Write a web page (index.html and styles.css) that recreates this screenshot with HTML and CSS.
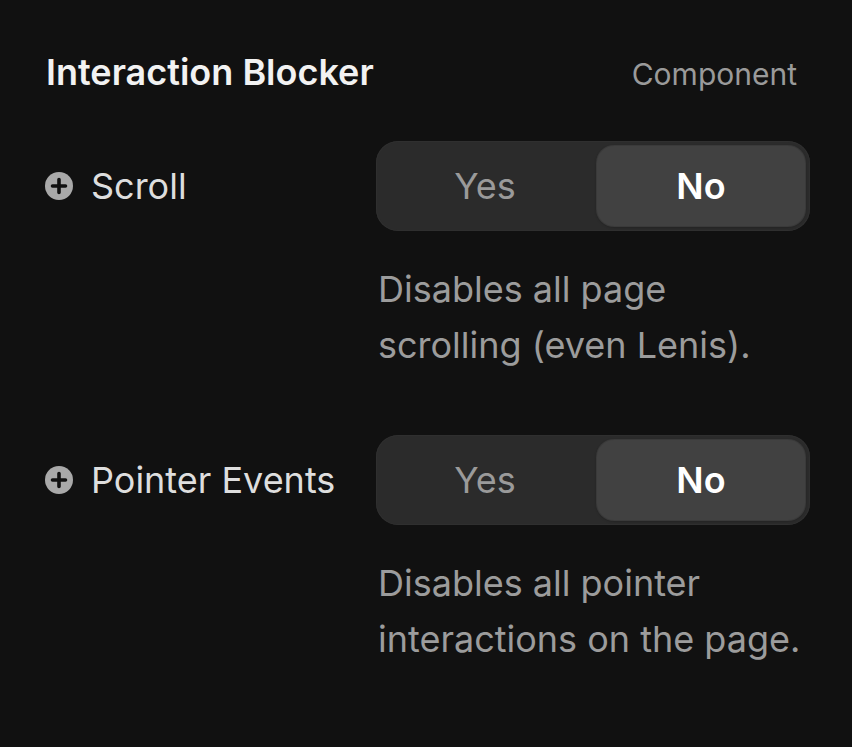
FILE: index.html
```html
<!DOCTYPE html>
<html lang="en">
<head>
<meta charset="utf-8">
<title>Interaction Blocker</title>
<link rel="stylesheet" href="styles.css">
</head>
<body>
<div class="panel">
  <div class="header">
    <div class="title">Interaction Blocker</div>
    <div class="kind">Component</div>
  </div>

  <div class="row">
    <div class="label">
      <svg class="plus" viewBox="0 0 28 28" width="28" height="28"><circle cx="14" cy="14" r="14" fill="#a9a9a9"/><path d="M14 7.5v13M7.5 14h13" stroke="#111" stroke-width="3.6" stroke-linecap="round"/></svg>
      <span>Scroll</span>
    </div>
    <div class="control">
      <div class="seg"><div class="opt">Yes</div><div class="opt active">No</div></div>
      <p class="desc">Disables all page scrolling (even Lenis).</p>
    </div>
  </div>

  <div class="row">
    <div class="label">
      <svg class="plus" viewBox="0 0 28 28" width="28" height="28"><circle cx="14" cy="14" r="14" fill="#a9a9a9"/><path d="M14 7.5v13M7.5 14h13" stroke="#111" stroke-width="3.6" stroke-linecap="round"/></svg>
      <span>Pointer Events</span>
    </div>
    <div class="control">
      <div class="seg"><div class="opt">Yes</div><div class="opt active">No</div></div>
      <p class="desc">Disables all pointer interactions on the page.</p>
    </div>
  </div>
</div>
</body>
</html>
```
FILE: styles.css
```css
html, body {
  margin: 0;
  padding: 0;
  background: #111111;
}
body {
  font-family: Inter, "Noto Sans", sans-serif;
  color: #e6e6e6;
}
.panel {
  padding: 52px 42px 0 46px;
  display: flex;
  flex-direction: column;
  gap: 49px;
}
.header {
  display: flex;
  justify-content: space-between;
  align-items: baseline;
  height: 40px;
  padding-right: 13px;
}
.title {
  font-size: 36px;
  line-height: 40px;
  font-weight: 600;
  color: #f2f2f2;
}
.kind {
  font-size: 30px;
  color: #9a9a9a;
}
.panel .row + .row {
  margin-top: 13px;
}
.row {
  display: grid;
  grid-template-columns: 330px 434px;
}
.label {
  display: flex;
  align-items: center;
  gap: 18px;
  height: 90px;
  font-size: 36px;
  color: #dedede;
  margin-left: -1px;
}
.plus {
  flex: none;
}
.control {
  display: flex;
  flex-direction: column;
}
.seg {
  height: 90px;
  box-sizing: border-box;
  background: #2b2b2b;
  border-radius: 22px;
  padding: 5px;
  display: grid;
  grid-template-columns: 1fr 1fr;
  column-gap: 8px;
  box-shadow: inset 0 0 0 1px #2f2f2f;
}
.opt {
  display: flex;
  align-items: center;
  justify-content: center;
  font-size: 36px;
  color: #9a9a9a;
  border-radius: 17px;
}
.opt.active {
  background: #414141;
  color: #ffffff;
  font-weight: 600;
  box-shadow: 0 0 0 1px #3a3a3a, 0 1px 3px rgba(0,0,0,0.35);
}
.desc {
  margin: 30px 0 0 2px;
  font-size: 36px;
  line-height: 56px;
  color: #9c9c9c;
  width: 430px;
}
```
